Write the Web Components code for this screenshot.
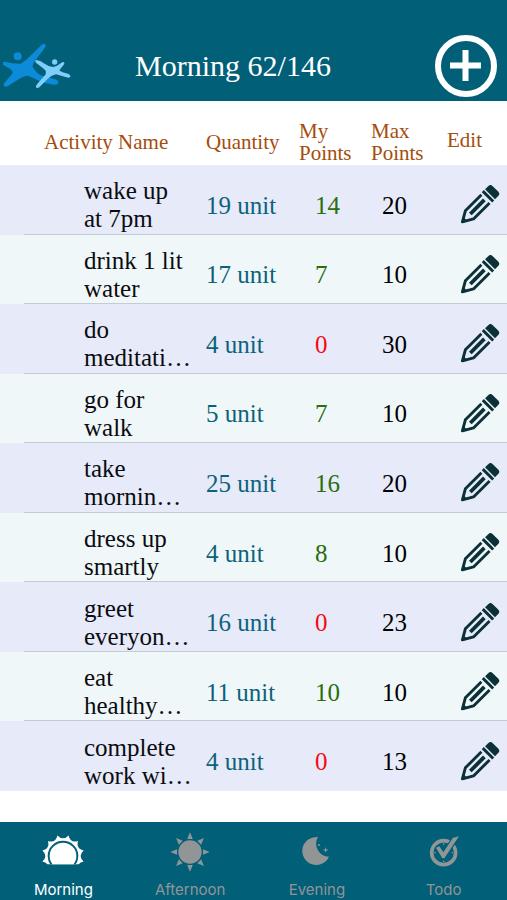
<!DOCTYPE html>
<html lang="en">
<head>
<meta charset="utf-8">
<meta name="viewport" content="width=device-width, initial-scale=1">
<title>Morning activities</title>
<style>
  :root { --teal: #025f78; --muted: #919596; }
  body { margin: 0; background: #fff; font-family: "Liberation Serif", "Times New Roman", serif; }
</style>
</head>
<body>
<planner-app>
  <app-header slot="header">Morning 62/146</app-header>
  <activity-table></activity-table>
  <tab-bar slot="footer">
    <tab-item icon="morning" current>Morning</tab-item>
    <tab-item icon="afternoon">Afternoon</tab-item>
    <tab-item icon="evening">Evening</tab-item>
    <tab-item icon="todo">Todo</tab-item>
  </tab-bar>
</planner-app>

<script>
const polar = (cx, cy, r, deg) => {
  const a = deg * Math.PI / 180;
  return (cx + r * Math.sin(a)).toFixed(1) + ' ' + (cy - r * Math.cos(a)).toFixed(1);
};

// Scalloped corona of the rising sun: twelve tips joined by concave curves.
let corona = 'M' + polar(63, 63, 64, -15);
for (let i = 0; i < 12; i++) {
  corona += 'Q' + polar(63, 63, 44, i * 30) + ' ' + polar(63, 63, 64, i * 30 + 15);
}
corona += 'Z';

let rays = '';
for (let i = 0; i < 8; i++) {
  rays += 'M' + polar(60, 60, 59, i * 45) + 'L' + polar(60, 60, 40, i * 45 - 12) +
          'L' + polar(60, 60, 40, i * 45 + 12) + 'Z';
}

const ICONS = {
  logo: `<svg viewBox="0 36 216 144" width="72" height="48">
    <g fill="#0b8bd8"><circle cx="53" cy="79" r="12"/>
    <path d="M14 95Q38 101 62 101Q76 93 87 82L125 44Q133 38 137 45Q138 49 134 54L105 92Q98 101 98 110Q105 125 122 136L166 148Q176 152 175 159Q172 165 162 164Q138 162 118 153L85 137Q72 138 62 144L23 169Q13 173 11 166Q10 162 15 157L38 130Q38 122 31 117L11 106Q4 98 14 95Z"/></g>
    <g fill="#7fcdfb"><circle cx="164" cy="96" r="8"/>
    <path d="M109 90Q120 91 134 101Q144 109 159 111Q172 109 183 99Q190 93 193 98Q194 102 190 106L178 121Q184 127 206 132Q213 136 211 141Q207 145 199 142L168 133Q154 136 145 145L118 172Q111 177 108 172Q107 168 111 163L136 134Q141 124 132 117L108 98Q103 91 109 90Z"/></g></svg>`,
  plus: `<svg viewBox="0 0 62 62" width="62" height="62" fill="none" stroke="#fff">
    <circle cx="31" cy="31" r="28" stroke-width="6"/>
    <path d="M15 30.5H46M30.5 15V46" stroke-width="6"/></svg>`,
  pencil: `<svg viewBox="0 -5 125 125" width="40" height="40">
    <g transform="translate(4 117) rotate(-45)" fill="none" stroke="#0b3038">
    <path d="M107 -18H36L5 0L36 18H107" stroke-width="9" stroke-linejoin="round"/>
    <path d="M40 0H102" stroke-width="12"/>
    <path d="M0 0L18 -10V10Z" fill="#0b3038" stroke="none"/>
    <path d="M118 -23V23" stroke-width="9"/>
    <path d="M127 -22H141Q151 -22 151 -12V12Q151 22 141 22H127Z" fill="#0b3038" stroke="none"/></g></svg>`,
  morning: `<svg viewBox="0 -9 126 120" width="42" height="40" fill="currentColor">
    <clipPath id="horizon"><path d="M0 -9H126V88H0Z"/></clipPath>
    <g clip-path="url(#horizon)"><path d="${corona}"/>
    <circle cx="63" cy="63" r="43" stroke="#025f78" stroke-width="6"/></g></svg>`,
  afternoon: `<svg viewBox="0 0 120 120" width="40" height="40" fill="currentColor">
    <circle cx="60" cy="60" r="35"/><path d="${rays}"/></svg>`,
  evening: `<svg viewBox="3 0 120 120" width="40" height="40" fill="currentColor">
    <path d="M66 15A42 42 0 1 0 99 74A39 39 0 0 1 66 15Z"/>
    <circle cx="69" cy="39" r="3"/>
    <path d="M89 45L91 52L98 54L91 56L89 63L87 56L80 54L87 52Z"/></svg>`,
  todo: `<svg viewBox="0 0 120 120" width="40" height="40" fill="none" stroke="currentColor">
    <circle cx="59" cy="62" r="36" stroke-width="11"/>
    <path d="M59 34V38M59 86V90M31 62H35M83 62H87" stroke-width="4"/>
    <path d="M37 47L47 43L58 62L87 17L105 13L61 79H55Z" fill="#025f78" stroke="#025f78" stroke-width="7"/>
    <path d="M36 47L46 43L58 61L87 17L105 13L61 79H55Z" fill="currentColor" stroke="none"/></svg>`
};

const define = (name, render) => customElements.define(name, class extends HTMLElement {
  connectedCallback() {
    if (!this.shadowRoot) this.attachShadow({ mode: 'open' }).innerHTML = render(this);
  }
});

define('line-icon', el => `<style>:host{display:block;line-height:0}svg{display:block}</style>
  ${ICONS[el.getAttribute('name')].replace('<svg', '<svg aria-hidden="true"')}`);

define('planner-app', () => `<style>
    :host { display: flex; flex-direction: column; min-height: 100vh; }
    main { flex: 1; display: flex; flex-direction: column; padding-bottom: 31px; }
    ::slotted(activity-table) { flex: 1; }
  </style>
  <slot name="header"></slot><main><slot></slot></main><slot name="footer"></slot>`);

define('app-header', () => `<style>
    :host { display: block; background: var(--teal); color: #fff; }
    header { display: grid; grid-template-columns: 72px 1fr 113px; align-items: end; padding: 35px 0 4px; }
    h1 { margin: 0; padding: 14px 0; align-self: center; text-align: center; font-size: 30px; line-height: 34px; font-weight: 400; }
    a { display: block; padding-bottom: 7px; }
    button { justify-self: end; margin: 0 10px 0 0; padding: 0; border: 0; background: none; cursor: pointer; }
  </style>
  <header><a href="#home" aria-label="Home"><line-icon name="logo"></line-icon></a>
  <h1><slot></slot></h1>
  <button aria-label="Add activity"><line-icon name="plus"></line-icon></button></header>`);

const ACTIVITIES = [
  ['wake up at 7pm', 19, 14, 20],
  ['drink 1 lit water', 17, 7, 10],
  ['do meditati…', 4, 0, 30],
  ['go for walk', 5, 7, 10],
  ['take mornin…', 25, 16, 20],
  ['dress up smartly', 4, 8, 10],
  ['greet everyon…', 16, 0, 23],
  ['eat healthy…', 11, 10, 10],
  ['complete work wi…', 4, 0, 13]
];

define('activity-table', () => `<style>
    :host { display: flex; flex-direction: column; }
    table { flex: 1; width: 100%; table-layout: fixed; border-collapse: collapse; }
    .quantity { width: 93px; } .mine { width: 72px; } .max { width: 76px; } .edit { width: 60px; }
    th, td { padding: 0; text-align: left; font-weight: 400; }
    thead tr { height: 64px; }
    thead th { color: #a44d0c; font-size: 21px; line-height: 22px; padding-top: 18px; }
    thead th:first-child { padding-left: 44px; }
    thead th.edit { padding-top: 14px; }
    tbody tr { background: #e6eaf9 linear-gradient(#c5cbd5, #c5cbd5) 24px 100% / 100% 1px no-repeat; }
    tbody tr:nth-child(even) { background-color: #f0f7f9; }
    tbody tr:last-child { background-image: none; }
    tbody { font-size: 25px; line-height: 28px; }
    tbody th { padding: 12px 14px 1px 84px; color: #0b0b10; }
    tbody td { padding-top: 12px; }
    td.quantity { color: #0c627a; }
    td.mine { padding-left: 16px; color: #2a6f0c; }
    td.zero { color: #f40a14; }
    td.max { padding-left: 11px; }
    td.edit { padding: 9px 0 0 13px; }
    button { display: block; padding: 0; border: 0; background: none; cursor: pointer; }
  </style>
  <table>
    <thead><tr><th scope="col">Activity Name</th><th scope="col" class="quantity">Quantity</th>
      <th scope="col" class="mine">My<br>Points</th><th scope="col" class="max">Max<br>Points</th>
      <th scope="col" class="edit">Edit</th></tr></thead>
    <tbody>${ACTIVITIES.map(([name, quantity, mine, max]) => `<tr>
      <th scope="row">${name}</th><td class="quantity">${quantity} unit</td>
      <td class="mine${mine ? '' : ' zero'}">${mine}</td><td class="max">${max}</td>
      <td class="edit"><button aria-label="Edit ${name}"><line-icon name="pencil"></line-icon></button></td></tr>`).join('')}
    </tbody>
  </table>`);

define('tab-bar', () => `<style>
    :host { display: block; background: var(--teal); }
    nav { display: flex; }
    ::slotted(tab-item) { flex: 1; }
  </style><nav><slot></slot></nav>`);

define('tab-item', el => `<style>
    :host { display: block; color: var(--muted); font-family: Inter, "Liberation Sans", sans-serif; }
    :host([current]) { color: #fff; }
    a { display: flex; flex-direction: column; align-items: center; gap: 9px; padding: 10px 0 1px;
        color: inherit; text-decoration: none; font-size: 15px; line-height: 18px; }
  </style>
  <a href="#${el.getAttribute('icon')}"${el.hasAttribute('current') ? ' aria-current="page"' : ''}>
  <line-icon name="${el.getAttribute('icon')}"></line-icon><slot></slot></a>`);
</script>
</body>
</html>
